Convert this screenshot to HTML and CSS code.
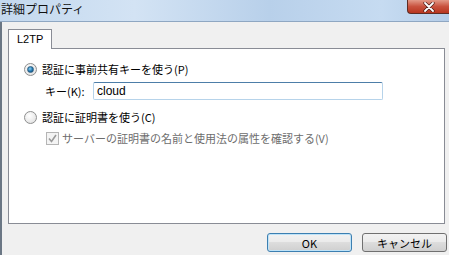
FILE: index.html
```html
<!DOCTYPE html>
<html lang="ja">
<head>
    <meta charset="UTF-8">
    <title>詳細プロパティ</title>
    <link rel="stylesheet" href="styles.css">
</head>
<body>
    <div class="window">
        <div class="titlebar">
            <span class="title">詳細プロパティ</span>
            <div class="close">
                <svg width="12" height="10" viewBox="0 0 12 10">
                    <path d="M2 1 L10 9 M10 1 L2 9" stroke="#4a1a14" stroke-width="3.2" stroke-linecap="round"/>
                    <path d="M2 1 L10 9 M10 1 L2 9" stroke="#ffffff" stroke-width="1.8" stroke-linecap="round"/>
                </svg>
            </div>
        </div>
        <div class="body">
            <div class="tabs">
                <div class="tab">L2TP</div>
            </div>
            <div class="panel">
                <div class="row row-first">
                    <span class="radio checked"></span>
                    <span class="label">認証に事前共有キーを使う(P)</span>
                </div>
                <div class="row row-key">
                    <span class="key-label">キー(K):</span>
                    <div class="input">cloud</div>
                </div>
                <div class="row row-cert">
                    <span class="radio"></span>
                    <span class="label">認証に証明書を使う(C)</span>
                </div>
                <div class="row row-check">
                    <span class="checkbox">
                        <svg width="9" height="9" viewBox="0 0 9 9">
                            <path d="M1 4.5 L3.5 7.5 L8 1" stroke="#9a9a9a" stroke-width="1.6" fill="none"/>
                        </svg>
                    </span>
                    <span class="label disabled">サーバーの証明書の名前と使用法の属性を確認する(V)</span>
                </div>
            </div>
            <div class="buttons">
                <button class="btn default">OK</button>
                <button class="btn">キャンセル</button>
            </div>
        </div>
    </div>
</body>
</html>
```

FILE: styles.css
```css
body {
    margin: 0;
    font-family: "Noto Sans CJK JP", "Liberation Sans", sans-serif;
    font-size: 11px;
    color: #000;
}
.window {
    width: 449px;
    height: 255px;
    display: flex;
    flex-direction: column;
    overflow: hidden;
}
.titlebar {
    height: 21px;
    display: flex;
    justify-content: space-between;
    align-items: flex-start;
    background: linear-gradient(90deg, #c3d8ee 0%, #d3e3f4 30%, #b8d0ea 60%, #c6dbf1 85%, #b5cde8 100%);
    border-bottom: 1px solid #8fa7c2;
}
.title {
    font-size: 12px;
    line-height: 18px;
    padding-left: 1px;
    color: #111;
}
.close {
    width: 41px;
    height: 13px;
    margin-right: 0;
    background: linear-gradient(#e39a88, #c9523e 50%, #b8351f);
    border: 1px solid #5e2c24;
    border-top: none;
    border-right: none;
    border-radius: 0 0 0 4px;
    display: flex;
    justify-content: center;
    align-items: center;
}
.body {
    flex: 1;
    background: #f0f0f0;
    border-left: 2px solid #6b7785;
    padding: 7px 0 0 6px;
}
.tabs {
    display: flex;
}
.tab {
    width: 44px;
    height: 20px;
    background: #fff;
    border: 1px solid #898c95;
    border-bottom: none;
    box-sizing: border-box;
    font-family: "Liberation Sans", sans-serif;
    font-size: 11px;
    line-height: 19px;
    padding-left: 8px;
    position: relative;
    z-index: 1;
    margin-bottom: -1px;
}
.panel {
    width: 437px;
    height: 176px;
    box-sizing: border-box;
    background: #fff;
    border: 1px solid #898c95;
    padding: 12px 0 0 15px;
}
.row {
    display: flex;
    align-items: center;
    height: 16px;
}
.row-key {
    margin-top: 5px;
    height: 18px;
    padding-left: 21px;
}
.row-cert {
    margin-top: 9px;
}
.row-check {
    margin-top: 5px;
    padding-left: 22px;
}
.radio {
    width: 11px;
    height: 11px;
    border: 1px solid #8e8f8f;
    border-radius: 50%;
    background: radial-gradient(circle at 40% 35%, #fff, #e6e6e6 70%, #d2d2d2);
    display: flex;
    justify-content: center;
    align-items: center;
    margin-right: 5px;
}
.radio.checked::after {
    content: "";
    width: 5px;
    height: 5px;
    border-radius: 50%;
    background: radial-gradient(circle at 40% 35%, #8ad0f5, #1a6fa8 60%, #0d3d66);
    border: 1px solid #2f5f82;
}
.label {
    line-height: 16px;
}
.disabled {
    color: #6d6d6d;
}
.key-label {
    width: 48px;
}
.input {
    width: 290px;
    height: 18px;
    box-sizing: border-box;
    border: 1px solid #b6d3ea;
    border-top-color: #4d7ea8;
    border-radius: 2px;
    padding-left: 3px;
    font-family: "Liberation Sans", sans-serif;
    font-size: 12px;
    line-height: 16px;
}
.checkbox {
    width: 11px;
    height: 11px;
    border: 1px solid #b5b5b5;
    background: #f4f4f4;
    display: flex;
    justify-content: center;
    align-items: center;
    margin-right: 3px;
}
.buttons {
    display: flex;
    justify-content: flex-end;
    gap: 10px;
    margin-top: 9px;
    padding-right: 2px;
}
.btn {
    width: 85px;
    height: 19px;
    box-sizing: border-box;
    border: 1px solid #707070;
    border-radius: 3px;
    background: linear-gradient(#f2f2f2, #ebebeb 45%, #dddddd 50%, #cfcfcf);
    font-family: "Noto Sans CJK JP", "Liberation Sans", sans-serif;
    font-size: 11px;
    padding: 0;
    line-height: 16px;
}
.btn.default {
    border-color: #3c7fb1;
    box-shadow: inset 0 0 0 1px #bfe3f8;
}
```
